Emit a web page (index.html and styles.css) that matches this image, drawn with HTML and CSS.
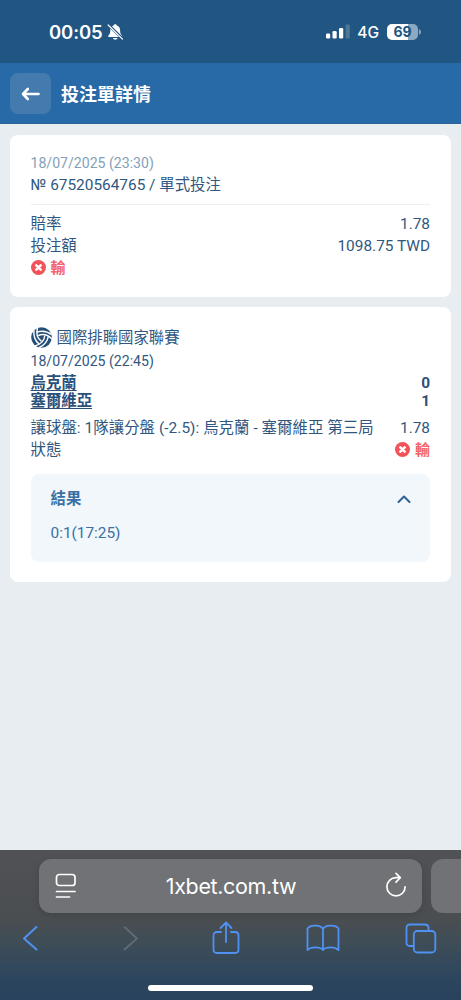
FILE: index.html
```html
<!DOCTYPE html>
<html lang="zh-Hant">
<head>
<meta charset="utf-8">
<meta name="viewport" content="width=device-width, initial-scale=1">
<title>投注單詳情</title>
<link rel="stylesheet" href="styles.css">
</head>
<body>
<div class="screen">
  <div class="status-bar">
    <div class="clock">
      <span class="time">00:05</span>
      <svg class="bell" width="17" height="18" viewBox="0 0 17 18">
        <path d="M8.2 1.200c.9 0 1.400.5 1.600 1.200 2.300.7 3.300 2.500 3.300 4.900 0 3.100.8 4.200 1.900 5.300.5.6.3 1.400-.6 1.400H2c-.9 0-1.100-.8-.6-1.400 1.100-1.100 1.900-2.200 1.900-5.300 0-2.400 1-4.200 3.300-4.900.2-.7.700-1.200 1.600-1.200zM6 15h4.500c-.2 1-1.100 1.700-2.250 1.700S6.200 16 6 15z" fill="#fff"/>
        <path d="M1.300 1.800L15.900 16" stroke="#215582" stroke-width="2.800"/>
        <path d="M1.100 2L15.500 16.100" stroke="#fff" stroke-width="1.200" stroke-linecap="round"/>
      </svg>
    </div>
    <div class="signals">
      <svg width="24" height="15" viewBox="0 0 24 15">
        <rect x="0" y="9.500" width="4.200" height="5" rx="1.200" fill="#fff"/>
        <rect x="6.500" y="7" width="4.200" height="7.500" rx="1.200" fill="#fff"/>
        <rect x="13" y="4" width="4.200" height="10.500" rx="1.200" fill="#fff"/>
        <rect x="19.600" y="0.500" width="4.200" height="14" rx="1.200" fill="#4e7794"/>
      </svg>
      <span class="network">4G</span>
      <span class="battery">69</span>
      <svg class="battery-tip" width="2" height="6" viewBox="0 0 2 6"><path d="M0 0Q2 1 2 3T0 6z" fill="#8da9c0"/></svg>
    </div>
  </div>

  <header class="header">
    <button class="back" aria-label="返回">
      <svg width="20" height="16" viewBox="0 0 20 16" fill="none" stroke="#fff" stroke-width="2.600" stroke-linecap="round" stroke-linejoin="round"><path d="M6.800 3L2 8l4.800 5M2.500 8H17.500"/></svg>
    </button>
    <h1 class="title">投注單詳情</h1>
  </header>

  <main class="content">
    <section class="card">
      <div class="row date muted">18/07/2025 (23:30)</div>
      <div class="row">№ 67520564765 / 單式投注</div>
      <div class="divider"></div>
      <div class="row"><span>賠率</span><span>1.78</span></div>
      <div class="row"><span>投注額</span><span>1098.75 TWD</span></div>
      <div class="row">
        <span class="lost"><svg width="15" height="15" viewBox="0 0 15 15"><circle cx="7.500" cy="7.500" r="7.500" fill="#f25358"/><path d="M5.300 5.300l4.400 4.400M9.700 5.300l-4.400 4.400" stroke="#fff" stroke-width="2.500" stroke-linecap="round"/></svg>輸</span>
      </div>
    </section>

    <section class="card match">
      <div class="row league">
        <svg width="21" height="21" viewBox="0 0 22 22">
          <circle cx="11" cy="11" r="10.800" fill="#244e78"/>
          <g fill="none" stroke="#fff" stroke-width="1.500">
            <g id="panel"><path d="M7.500 9Q15 5.500 22 12.500M6.200 5.400Q14.500 2.500 21.500 8"/></g>
            <use href="#panel" transform="rotate(120 11 11)"/>
            <use href="#panel" transform="rotate(240 11 11)"/>
          </g>
        </svg>
        <span>國際排聯國家聯賽</span>
      </div>
      <div class="row date">18/07/2025 (22:45)</div>
      <div class="teams">
        <div class="team"><a class="team-name">烏克蘭</a><span>0</span></div>
        <div class="team"><a class="team-name">塞爾維亞</a><span>1</span></div>
      </div>
      <div class="row"><span class="market">讓球盤: 1隊讓分盤 (-2.5): 烏克蘭 - 塞爾維亞 第三局</span><span>1.78</span></div>
      <div class="row"><span>狀態</span>
        <span class="lost"><svg width="15" height="15" viewBox="0 0 15 15"><circle cx="7.500" cy="7.500" r="7.500" fill="#f25358"/><path d="M5.300 5.300l4.400 4.400M9.700 5.300l-4.400 4.400" stroke="#fff" stroke-width="2.500" stroke-linecap="round"/></svg>輸</span>
      </div>
      <div class="result">
        <div class="row result-head"><span>結果</span>
          <svg width="14" height="10" viewBox="0 0 14 10" fill="none" stroke="#2f6498" stroke-width="2.100" stroke-linecap="round" stroke-linejoin="round"><path d="M1.500 8L7 2.500 12.500 8"/></svg>
        </div>
        <div class="row result-score">0:1(17:25)</div>
      </div>
    </section>
  </main>

  <footer class="browser">
    <div class="tabs">
      <div class="address">
        <svg width="22" height="26" viewBox="0 0 22 26" fill="none" stroke="#fff" stroke-width="1.700" stroke-linecap="round"><rect x="1.500" y="1.500" width="18.500" height="11" rx="2.800"/><path d="M1.500 18.500H20M1.500 24h13"/></svg>
        <span class="url">1xbet.com.tw</span>
        <svg class="reload" width="22" height="26" viewBox="0 0 22 26" fill="none" stroke="#fff" stroke-width="1.700" stroke-linecap="round" stroke-linejoin="round"><path d="M14.500 5.700H11A9.100 9.100 0 1 0 20.100 14.800M11 1.400l4.300 4.300L11 10.100"/></svg>
      </div>
      <div class="next-tab"></div>
    </div>
    <nav class="toolbar">
      <svg width="17" height="28" viewBox="0 0 17 28" fill="none" stroke="#4f92f3" stroke-width="2" stroke-linecap="round" stroke-linejoin="round"><path d="M14.500 3L2 14.500 14.500 25.500"/></svg>
      <svg width="17" height="28" viewBox="0 0 17 28" fill="none" stroke="#626b75" stroke-width="1.800" stroke-linecap="round" stroke-linejoin="round"><path d="M2.500 3L15 14.500 2.500 25.500"/></svg>
      <svg width="28" height="34" viewBox="0 0 28 34" fill="none" stroke="#4f92f3" stroke-width="1.800" stroke-linecap="round" stroke-linejoin="round"><path d="M9 11H5q-3.500 0-3.500 3.500v14Q1.500 32 5 32h18q3.500 0 3.500-3.500v-14Q26.500 11 23 11h-4M14 21V1.700M8.500 7L14 1.500 19.500 7"/></svg>
      <svg width="34" height="28" viewBox="0 0 34 28" fill="none" stroke="#4f92f3" stroke-width="1.800" stroke-linecap="round" stroke-linejoin="round"><path d="M17 5C15 .8 4.500.3 1.500 4.500V26C5 22.500 14 22.500 17 26c3-3.500 12-3.500 15.500 0V4.500C29.500.3 19 .8 17 5zM17 5v21"/></svg>
      <svg width="32" height="31" viewBox="0 0 32 31" fill="none" stroke="#4f92f3" stroke-width="1.800" stroke-linejoin="round"><rect x="8.800" y="8" width="21.500" height="21.500" rx="3.500"/><path d="M8.800 23H5Q1.500 23 1.500 19.500V5Q1.500 1.500 5 1.500h14.500Q23.500 1.500 23.500 5v3"/></svg>
    </nav>
    <div class="home-indicator"></div>
  </footer>
</div>
</body>
</html>
```
FILE: styles.css
```css
* { box-sizing: border-box; }
body { margin: 0; }
svg { display: block; flex: none; }

.screen {
  width: 461px;
  height: 1000px;
  display: flex;
  flex-direction: column;
  overflow: hidden;
  background: #e7edf1;
  color: #315780;
  font-family: Roboto, "Noto Sans CJK TC", sans-serif;
  font-size: 15.4px;
}

.status-bar {
  height: 63px;
  flex: none;
  display: flex;
  justify-content: space-between;
  padding: 21px 40px 0 49px;
  background: #215582;
  color: #fff;
  font-family: Inter, sans-serif;
}
.clock, .signals { display: flex; align-items: center; height: 21px; }
.clock { gap: 4px; }
.time { font-size: 18.5px; font-weight: 600; letter-spacing: -0.1px; }
.bell { margin-top: 1px; }
.network { font-size: 15.5px; font-weight: 500; margin: 1px 0 0 7px; }
.battery {
  width: 31px;
  height: 16px;
  margin-left: 8px;
  border-radius: 5px;
  background: linear-gradient(90deg, #fff 69%, #8da9c0 69%);
  color: #215582;
  font-size: 14px;
  font-weight: 700;
  line-height: 16px;
  text-align: center;
}
.battery-tip { margin-left: 1px; }

.header {
  height: 61px;
  flex: none;
  display: flex;
  align-items: center;
  gap: 10px;
  padding: 1px 10px 0;
  background: #286aa7;
  border-bottom: 1px solid #2c639a;
}
.back {
  display: grid;
  place-items: center;
  width: 41px;
  height: 41px;
  padding: 0;
  border: 0;
  border-radius: 8px;
  background: #447bae;
}
.title { margin: 2px 0 0; color: #fff; font-size: 18px; font-weight: 700; line-height: 24px; }

.content {
  flex: 1;
  display: flex;
  flex-direction: column;
  gap: 10px;
  padding: 11px 10px 0;
}
.card { height: 162px; padding: 17px 21px 0 20.5px; border-radius: 8px; background: #fff; }
.match { height: 275px; padding-top: 19px; }
.row {
  display: flex;
  align-items: center;
  justify-content: space-between;
  height: 22px;
  line-height: 22px;
  white-space: nowrap;
}
.date { font-size: 14.1px; }
.muted { color: #849fb9; }
.divider { height: 1px; margin: 8px 0; background: #eceff2; }
.lost { display: flex; align-items: center; gap: 5px; color: #f2656a; font-weight: 700; font-size: 15px; }
.lost svg { margin-bottom: 1px; }
.league { justify-content: flex-start; gap: 5px; height: 24px; }
.league svg { margin-bottom: 1px; }
.teams { margin: 3px 0 7px; font-weight: 700; color: #2b517b; }
.team { display: flex; justify-content: space-between; height: 17.5px; line-height: 17.5px; }
.team-name { text-decoration: underline; text-decoration-thickness: 1px; text-underline-offset: 2px; }
.market { letter-spacing: 0.06px; }

.result {
  height: 88px;
  margin-top: 13px;
  padding: 14px 19px 0 20px;
  border-radius: 8px;
  background: #f2f7fb;
  color: #3b70a3;
}
.result-head { font-weight: 700; }
.result-score { margin-top: 12px; }

.browser {
  height: 150px;
  flex: none;
  display: flex;
  flex-direction: column;
  background: linear-gradient(#505255 0%, #4b4e50 45%, #3e4d57 62%, #2b455f 88%, #29425d 100%);
}
.tabs { display: flex; gap: 9px; padding: 9px 0 0 39px; }
.address {
  width: 383px;
  height: 54px;
  flex: none;
  display: flex;
  align-items: center;
  justify-content: space-between;
  padding: 0 15px 0 16px;
  border-radius: 12px;
  background: #707275;
  box-shadow: 0 2px 7px #00000020;
}
.url { color: #fff; font-family: Inter, sans-serif; font-size: 21.5px; letter-spacing: -0.35px; }
.reload { margin-bottom: 2px; }
.next-tab { width: 30px; height: 54px; border-radius: 12px 0 0 12px; background: #707275; }
.toolbar {
  height: 50px;
  display: grid;
  grid-template-columns: 100px 90px 94px 98.5px 32px;
  align-items: center;
  padding-left: 22px;
}
.home-indicator { width: 165px; height: 6px; margin: 22px 0 0 148px; border-radius: 3px; background: #fff; }
```
